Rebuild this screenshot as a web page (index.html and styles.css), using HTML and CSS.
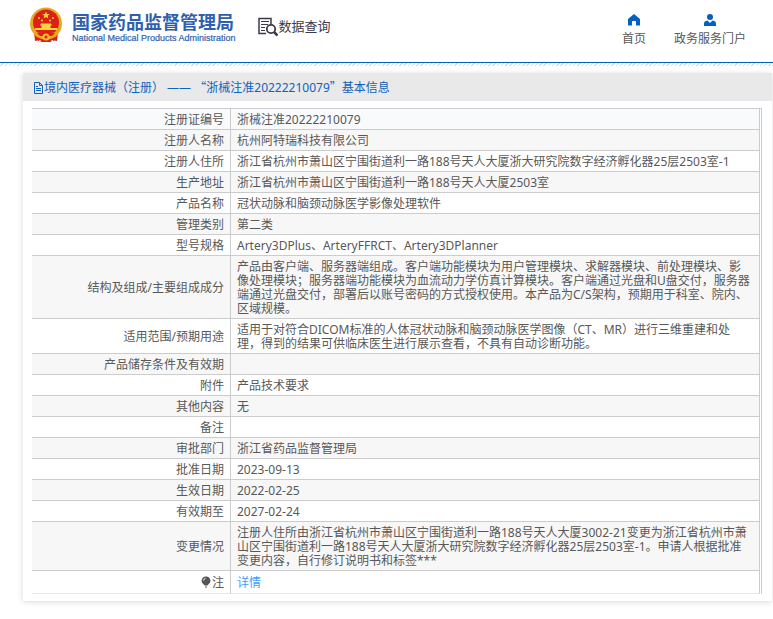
FILE: index.html
```html
<!DOCTYPE html>
<html lang="zh-CN">
<head>
    <meta charset="UTF-8">
    <meta name="viewport" content="width=device-width, initial-scale=1.0">
    <title>国家药品监督管理局 数据查询</title>
    <link rel="stylesheet" href="styles.css">
</head>
<body>
    <header class="header">
        <a href="#" class="logo">
            <svg class="emblem" viewBox="0 0 34 36" aria-hidden="true">
                <path d="M5 25h24l-1 9-5-1-2 2h-8l-2-2-5 1z" fill="#d8231c"/>
                <circle cx="17" cy="16.500" r="16" fill="#e9a823"/>
                <circle cx="17" cy="15.500" r="13" fill="#dc2018"/>
                <path d="M17 4.500l1.100 2.400 2.600.2-2 1.700.6 2.600-2.300-1.400-2.300 1.400.6-2.600-2-1.700 2.600-.2z" fill="#fbd33c"/>
                <g fill="#fbd33c">
                    <circle cx="10" cy="11" r="1"/>
                    <circle cx="13" cy="13.500" r="1"/>
                    <circle cx="21" cy="13.500" r="1"/>
                    <circle cx="24" cy="11" r="1"/>
                    <path d="M12 16.500h10l1 2h-1.500v2.500H28v2H6v-2h6.500v-2.500H11z"/>
                </g>
                <path d="M4 24.500c5 2 21 2 26 0l-3 5-5 2h-10l-5-2z" fill="#e9a823"/>
                <path d="M8 26h18l-3 3H11z" fill="#dc2018"/>
                <circle cx="17" cy="30" r="3.500" fill="#f2bd2d"/>
                <circle cx="17" cy="30" r="1.500" fill="#dc2018"/>
                <path d="M7 30l3 4M27 30l-3 4M13 32l-1 3M21 32l1 3" stroke="#d8231c" fill="none"/>
            </svg>
            <span class="logo-text">
                <span class="logo-cn">国家药品监督管理局</span>
                <span class="logo-en">National Medical Products Administration</span>
            </span>
        </a>
        <a href="#" class="query">
            <svg class="query-icon" viewBox="0 0 20 20" aria-hidden="true">
                <g fill="none" stroke="#3c3a4a">
                    <path d="M8 16.500H1V1.500h12V7" stroke-width="1.500"/>
                    <path d="M3 4.500h8M3 7.500h7M3 10.500h4M3 13.500h4"/>
                    <circle cx="13" cy="12" r="4.200" stroke-width="1.800"/>
                    <path d="M16 15l3.500 3.500" stroke-width="2.500"/>
                </g>
            </svg>
            数据查询
        </a>
        <nav class="nav">
            <a href="#" class="nav-item">
                <svg class="nav-icon" viewBox="0 0 12 12" aria-hidden="true">
                    <path d="M6 0l6 5v6.500H8V7H4v4.500H0V5z"/>
                </svg>
                首页
            </a>
            <a href="#" class="nav-item">
                <svg class="nav-icon" viewBox="0 0 12 12" aria-hidden="true">
                    <circle cx="6" cy="3" r="3"/>
                    <path d="M0 12V9.500Q0 7 3.500 6.500L6 9l2.500-2.500Q12 7 12 9.500V12z"/>
                </svg>
                政务服务门户
            </a>
        </nav>
    </header>
    <div class="stripe"></div>

    <main class="panel">
        <h1 class="panel-title">
            <svg class="doc-icon" viewBox="0 0 11 12" aria-hidden="true">
                <path d="M1.500.5h5l3 3v8h-8zM6.500.5v3h3M3 4.500h2M3 6.500h5M3 8.500h5" fill="none" stroke="#0f62bd"/>
            </svg>
            <span>境内医疗器械（注册） —— <span class="quote">“</span>浙械注准20222210079<span class="quote">”</span>基本信息</span>
        </h1>
        <div class="panel-body">
            <table class="info">
                <tbody>
                    <tr><th scope="row">注册证编号</th><td>浙械注准20222210079</td></tr>
                    <tr><th scope="row">注册人名称</th><td>杭州阿特瑞科技有限公司</td></tr>
                    <tr><th scope="row">注册人住所</th><td>浙江省杭州市萧山区宁围街道利一路188号天人大厦浙大研究院数字经济孵化器25层2503室-1</td></tr>
                    <tr><th scope="row">生产地址</th><td>浙江省杭州市萧山区宁围街道利一路188号天人大厦2503室</td></tr>
                    <tr><th scope="row">产品名称</th><td>冠状动脉和脑颈动脉医学影像处理软件</td></tr>
                    <tr><th scope="row">管理类别</th><td>第二类</td></tr>
                    <tr><th scope="row">型号规格</th><td>Artery3DPlus、ArteryFFRCT、Artery3DPlanner</td></tr>
                    <tr><th scope="row">结构及组成/主要组成成分</th><td>产品由客户端、服务器端组成。客户端功能模块为用户管理模块、求解器模块、前处理模块、影像处理模块；服务器端功能模块为血流动力学仿真计算模块。客户端通过光盘和U盘交付，服务器端通过光盘交付，部署后以账号密码的方式授权使用。本产品为C/S架构，预期用于科室、院内、区域规模。</td></tr>
                    <tr><th scope="row">适用范围/预期用途</th><td>适用于对符合DICOM标准的人体冠状动脉和脑颈动脉医学图像（CT、MR）进行三维重建和处理，得到的结果可供临床医生进行展示查看，不具有自动诊断功能。</td></tr>
                    <tr><th scope="row">产品储存条件及有效期</th><td></td></tr>
                    <tr><th scope="row">附件</th><td>产品技术要求</td></tr>
                    <tr><th scope="row">其他内容</th><td>无</td></tr>
                    <tr><th scope="row">备注</th><td></td></tr>
                    <tr><th scope="row">审批部门</th><td>浙江省药品监督管理局</td></tr>
                    <tr><th scope="row">批准日期</th><td>2023-09-13</td></tr>
                    <tr><th scope="row">生效日期</th><td>2022-02-25</td></tr>
                    <tr><th scope="row">有效期至</th><td>2027-02-24</td></tr>
                    <tr><th scope="row">变更情况</th><td>注册人住所由浙江省杭州市萧山区宁围街道利一路188号天人大厦3002-21变更为浙江省杭州市萧山区宁围街道利一路188号天人大厦浙大研究院数字经济孵化器25层2503室-1。申请人根据批准变更内容，自行修订说明书和标签***</td></tr>
                    <tr class="note">
                        <th scope="row"><svg class="note-icon" viewBox="0 0 10 12" aria-hidden="true">
                            <path d="M5 .5a4.200 4.200 0 0 1 2.500 7.700L6.500 9.500h-3L2.500 8.200A4.200 4.200 0 0 1 5 .5z" fill="#555"/>
                            <path d="M4 11h2" stroke="#555"/>
                            <path d="M2.500 4.500q.3-1.800 2-2.200" stroke="#fff" fill="none"/>
                        </svg>注</th>
                        <td><a href="#" class="detail-link">详情</a></td>
                    </tr>
                </tbody>
            </table>
        </div>
    </main>
</body>
</html>
```
FILE: styles.css
```css
* {
    box-sizing: border-box;
}
body {
    margin: 0;
    background: #fff;
    color: #585858;
    font-family: "Noto Sans", "Noto Sans CJK SC", sans-serif;
    font-size: 12px;
    line-height: 14px;
}
a {
    color: inherit;
    text-decoration: none;
}

/* header */
.header {
    display: flex;
    align-items: flex-start;
    height: 63px;
    padding: 7px 27px 0 29px;
    border-bottom: 1px solid #0061bf;
}
.logo {
    display: flex;
    gap: 9px;
    color: #2f5fae;
}
.emblem {
    width: 34px;
    height: 36px;
}
.logo-text {
    display: flex;
    flex-direction: column;
    padding-top: 4px;
    white-space: nowrap;
}
.logo-cn {
    font-family: "Noto Sans CJK SC", sans-serif;
    font-size: 18px;
    font-weight: bold;
    line-height: 20px;
}
.logo-en {
    font-family: "Liberation Sans", sans-serif;
    font-size: 9px;
    line-height: 14px;
    -webkit-text-stroke: 0.2px #2f5fae;
}
.query {
    display: flex;
    gap: 1px;
    margin-left: 22px;
    padding-top: 10px;
    color: #3c3a4a;
    font-size: 13px;
    line-height: 18px;
    white-space: nowrap;
}
.query-icon {
    width: 20px;
    height: 20px;
}
.nav {
    display: flex;
    gap: 28px;
    margin-left: auto;
    padding-top: 7px;
}
.nav-item {
    display: flex;
    flex-direction: column;
    align-items: center;
    gap: 6px;
    white-space: nowrap;
}
.nav-icon {
    width: 12px;
    height: 12px;
    fill: #0061bf;
}
.stripe {
    height: 3px;
    background: repeating-linear-gradient(135deg, #fff 0, #fff 2px, #ddd 2px, #ddd 3px);
}

/* detail panel */
.panel {
    margin: 7px 1px 16px 23px;
    box-shadow: 0 1px 6px rgba(0, 0, 0, 0.15);
}
.panel-title {
    display: flex;
    align-items: center;
    height: 28px;
    margin: 0;
    padding: 2px 10px 0;
    background: #e9e9e9;
    border-bottom: 1px solid #e6e8f2;
    color: #0f62bd;
    font-size: 12px;
    font-weight: normal;
}
.doc-icon {
    width: 11px;
    height: 12px;
}
.quote {
    font-family: "Noto Sans CJK SC", sans-serif;
}
.panel-body {
    padding: 7px 10px 7px 9px;
}
.info {
    width: 100%;
    border-collapse: separate;
    border-spacing: 0;
    border-top: 1px solid #ccc;
    border-right: 1px solid #ccccd6;
    padding-right: 1px;
}
.info th,
.info td {
    height: 21px;
    padding: 4px 8px 2px 6px;
    border-right: 1px solid #ccc;
    border-bottom: 1px solid #ccc;
}
.info th {
    width: 199px;
    padding-right: 6px;
    font-weight: normal;
    text-align: right;
}
.info tr:nth-child(even) {
    background: #f7f7f7;
}
.info tr:first-child {
    background: #f9fafc;
}
.info .note th,
.info .note td {
    height: 23px;
    border-bottom-color: #e9e9e9;
}
.note-icon {
    width: 10px;
    height: 12px;
    margin-right: 1px;
    vertical-align: -1px;
}
.detail-link {
    color: #409eff;
}
```
